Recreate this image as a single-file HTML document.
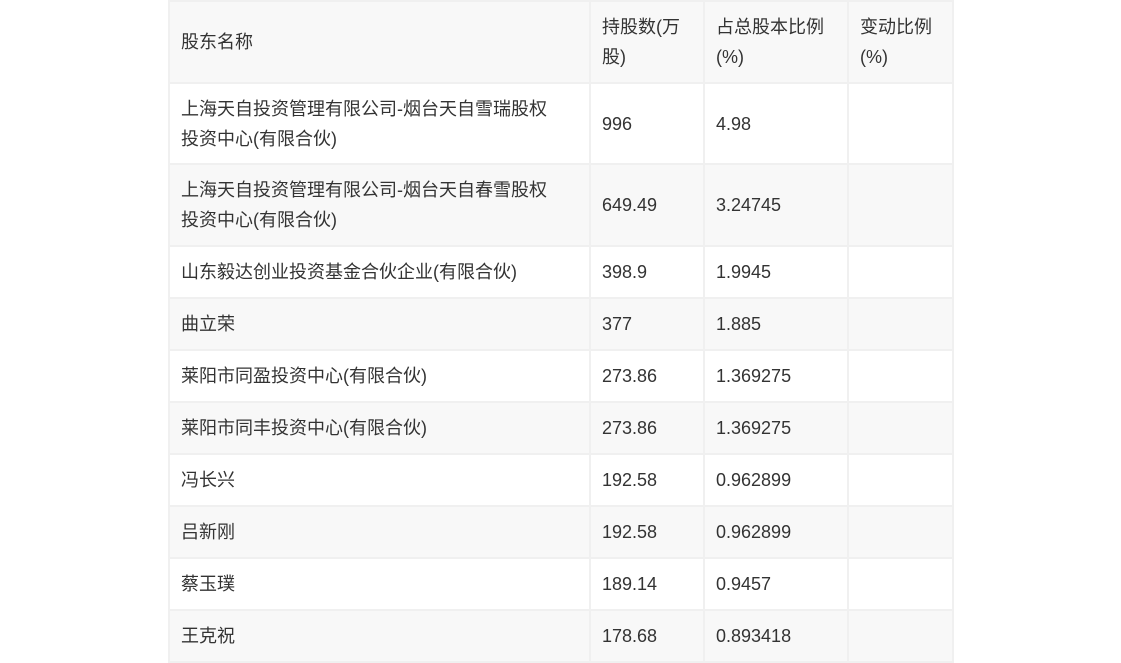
<!DOCTYPE html>
<html><head><meta charset="utf-8"><style>
body{margin:0;width:1121px;height:661px;background:#fff;overflow:hidden;font-family:"Liberation Sans","Noto Sans CJK SC",sans-serif;color:#333;}
table{position:absolute;left:168px;top:0;border-collapse:collapse;width:784px;table-layout:fixed;font-size:18px;}
td{border:2px solid #f0f0f0;padding:0 11px;line-height:30px;vertical-align:middle;}
tr:nth-child(odd) td{background:#f8f8f8;}
tr:nth-child(even) td{background:#fff;}
.w{width:386px;}
</style></head><body>
<table>
<colgroup><col style="width:421px"><col style="width:114px"><col style="width:144px"><col style="width:105px"></colgroup>
<tr style="height:82px"><td>股东名称</td><td>持股数(万股)</td><td>占总股本比例(%)</td><td>变动比例(%)</td></tr>
<tr style="height:81px"><td><div class="w">上海天自投资管理有限公司-烟台天自雪瑞股权<br>投资中心(有限合伙)</div></td><td>996</td><td>4.98</td><td></td></tr>
<tr style="height:82px"><td><div class="w">上海天自投资管理有限公司-烟台天自春雪股权<br>投资中心(有限合伙)</div></td><td>649.49</td><td>3.24745</td><td></td></tr>
<tr style="height:52px"><td>山东毅达创业投资基金合伙企业(有限合伙)</td><td>398.9</td><td>1.9945</td><td></td></tr>
<tr style="height:52px"><td>曲立荣</td><td>377</td><td>1.885</td><td></td></tr>
<tr style="height:52px"><td>莱阳市同盈投资中心(有限合伙)</td><td>273.86</td><td>1.369275</td><td></td></tr>
<tr style="height:52px"><td>莱阳市同丰投资中心(有限合伙)</td><td>273.86</td><td>1.369275</td><td></td></tr>
<tr style="height:52px"><td>冯长兴</td><td>192.58</td><td>0.962899</td><td></td></tr>
<tr style="height:52px"><td>吕新刚</td><td>192.58</td><td>0.962899</td><td></td></tr>
<tr style="height:52px"><td>蔡玉璞</td><td>189.14</td><td>0.9457</td><td></td></tr>
<tr style="height:52px"><td>王克祝</td><td>178.68</td><td>0.893418</td><td></td></tr>
</table>
</body></html>
